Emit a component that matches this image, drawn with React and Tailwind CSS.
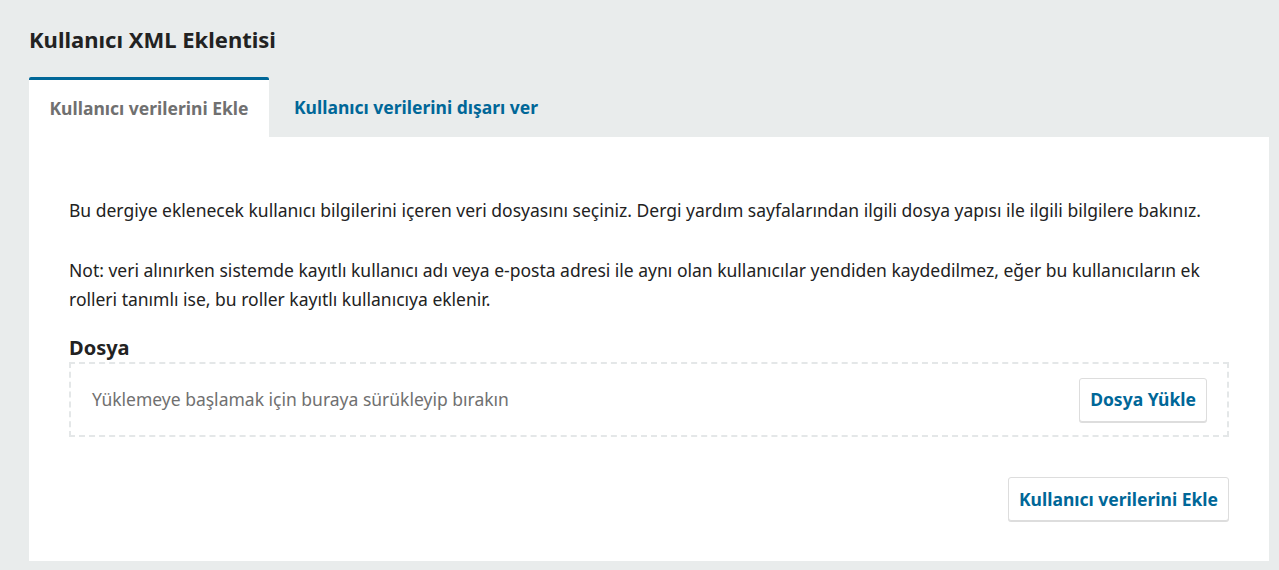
export default function App() {
    return (
        <div className="min-h-[570px] bg-[#e9ecec] pl-[29px] pr-[10px] pt-[23px] font-['Noto_Sans',sans-serif] text-[#222]">
            <h1 className="text-[22px] font-bold leading-[32px]">Kullanıcı XML Eklentisi</h1>

            {/* sekmeler */}
            <div className="mt-[22px] flex">
                <div className="flex h-[60px] w-[240px] items-center justify-center rounded-t-[2px] border-t-[3px] border-[#006798] bg-white text-[17.5px] font-bold text-[#707070]">
                    Kullanıcı verilerini Ekle
                </div>
                <div className="flex h-[60px] items-center px-[25px] text-[17.5px] font-bold text-[#006798]">
                    Kullanıcı verilerini dışarı ver
                </div>
            </div>

            <div className="bg-white px-10 pb-10 pt-[59px] text-[17.5px] leading-[29px]">
                <p>
                    Bu dergiye eklenecek kullanıcı bilgilerini içeren veri dosyasını seçiniz. Dergi yardım sayfalarından ilgili dosya yapısı ile ilgili bilgilere bakınız.
                </p>
                <p className="mt-[31px]">
                    Not: veri alınırken sistemde kayıtlı kullanıcı adı veya e-posta adresi ile aynı olan kullanıcılar yendiden kaydedilmez, eğer bu kullanıcıların ek rolleri tanımlı ise, bu roller kayıtlı kullanıcıya eklenir.
                </p>

                <div className="mt-[22px]">
                    <div className="text-[20px] font-bold leading-[24px]">Dosya</div>
                    <div className="mt-[2px] flex h-[75px] items-center justify-between border-2 border-dashed border-[#e4e7e8] pl-[21px] pr-[20px]">
                        <span className="text-[#707070]">Yüklemeye başlamak için buraya sürükleyip bırakın</span>
                        <button className="h-[44px] rounded-[3px] border border-[#dddddd] bg-white px-[10px] text-[17.5px] font-bold text-[#006798] shadow-[0_1px_0_#dddddd]">
                            Dosya Yükle
                        </button>
                    </div>
                </div>

                <div className="mt-[40px] flex justify-end">
                    <button className="h-[44px] rounded-[3px] border border-[#dddddd] bg-white px-[10px] text-[17.5px] font-bold text-[#006798] shadow-[0_1px_0_#dddddd]">
                        Kullanıcı verilerini Ekle
                    </button>
                </div>
            </div>
        </div>
    );
}
